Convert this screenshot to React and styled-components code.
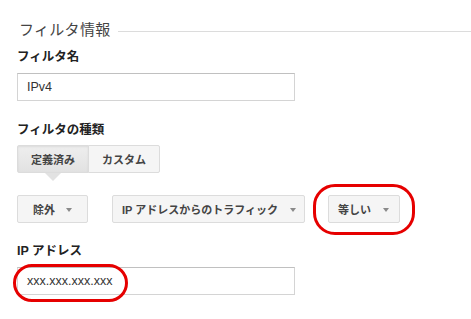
import React from "react";
import styled, { createGlobalStyle } from "styled-components";

const Global = createGlobalStyle`
  html, body { margin: 0; padding: 0; background: #fff; }
  body { font-family: "Liberation Sans", "Noto Sans CJK JP", sans-serif; color: #222; }
`;

const Page = styled.div`
  width: 471px;
  height: 319px;
  padding: 20px 0 0 17px;
  box-sizing: border-box;
  overflow: hidden;
`;

const TitleRow = styled.div`
  display: flex;
  align-items: center;
  height: 20px;
  gap: 7px;
`;

const Title = styled.div`
  font-size: 15px;
  line-height: 20px;
  color: #444;
  font-weight: 400;
  margin-left: 2px;
  letter-spacing: 0.3px;
  white-space: nowrap;
`;

const Rule = styled.div`
  flex: 1;
  height: 1px;
  background: #dcdcdc;
  margin-top: 2px;
`;

const Label = styled.div`
  font-size: 12.5px;
  line-height: 16px;
  font-weight: bold;
  color: #222;
  margin-top: ${(p) => p.$mt}px;
  white-space: nowrap;
`;

const FieldWrap = styled.div`
  position: relative;
  width: 278px;
  margin-top: 8px;
`;

const Input = styled.div`
  box-sizing: border-box;
  width: 278px;
  height: 28px;
  border: 1px solid #d4d4d4;
  border-top-color: #c0c0c0;
  background: #fff;
  padding-left: 9px;
  display: flex;
  align-items: center;
  font-size: 12.5px;
  color: #333;
`;

const Ring = styled.div`
  position: absolute;
  left: ${(p) => p.$l}px;
  top: ${(p) => p.$t}px;
  width: ${(p) => p.$w}px;
  height: ${(p) => p.$h}px;
  border: 3px solid #e60000;
  border-radius: ${(p) => p.$r}px;
  box-sizing: border-box;
  pointer-events: none;
`;

const Segmented = styled.div`
  display: flex;
  margin-top: 7px;
  position: relative;
  width: max-content;
`;

const SegButton = styled.div`
  box-sizing: border-box;
  height: 28px;
  width: ${(p) => p.$w}px;
  display: flex;
  align-items: center;
  justify-content: center;
  font-size: 11px;
  font-weight: bold;
  color: #444;
  border: 1px solid #dcdcdc;
  background: ${(p) => (p.$active ? "linear-gradient(#eeeeee, #e2e2e2)" : "#f5f5f5")};
  box-shadow: ${(p) => (p.$active ? "inset 0 1px 2px rgba(0,0,0,0.08)" : "none")};
  border-radius: ${(p) => (p.$first ? "2px 0 0 2px" : "0 2px 2px 0")};
  margin-left: ${(p) => (p.$first ? 0 : -1)}px;
  position: relative;
`;

const Pointer = styled.span`
  position: absolute;
  left: 50%;
  top: 27px;
  margin-left: -8px;
  width: 0;
  height: 0;
  border-left: 8px solid transparent;
  border-right: 8px solid transparent;
  border-top: 8px solid #e2e2e2;
  z-index: 2;
`;

const DropRow = styled.div`
  display: flex;
  align-items: center;
  margin-top: 22px;
`;

const DropSlot = styled.div`
  position: relative;
  margin-left: ${(p) => p.$ml}px;
`;

const Drop = styled.div`
  box-sizing: border-box;
  height: 28px;
  width: ${(p) => p.$w}px;
  display: flex;
  align-items: center;
  justify-content: space-between;
  padding: 0 ${(p) => p.$pr}px 0 ${(p) => p.$pl}px;
  font-size: 11px;
  font-weight: bold;
  color: #444;
  background: #f5f5f5;
  border: 1px solid #dcdcdc;
  border-radius: 2px;
  white-space: nowrap;
`;

const Caret = styled.span`
  width: 0;
  height: 0;
  border-left: 3.5px solid transparent;
  border-right: 3.5px solid transparent;
  border-top: 4px solid #8a8a8a;
  margin-top: 2px;
`;

export default function App() {
  return (
    <Page>
      <Global />
      <TitleRow>
        <Title>フィルタ情報</Title>
        <Rule />
      </TitleRow>

      <Label $mt={9}>フィルタ名</Label>
      <FieldWrap>
        <Input>IPv4</Input>
      </FieldWrap>

      <Label $mt={21}>フィルタの種類</Label>
      <Segmented>
        <SegButton $first $active $w={72}>
          定義済み
          <Pointer />
        </SegButton>
        <SegButton $w={72}>カスタム</SegButton>
      </Segmented>

      <DropRow>
        <DropSlot $ml={0}>
          <Drop $w={71} $pl={15} $pr={15}>
            除外 <Caret />
          </Drop>
        </DropSlot>
        <DropSlot $ml={24}>
          <Drop $w={193} $pl={9} $pr={8}>
            IP アドレスからのトラフィック <Caret />
          </Drop>
        </DropSlot>
        <DropSlot $ml={23}>
          <Drop $w={72} $pl={9} $pr={10}>
            等しい <Caret />
          </Drop>
          <Ring $l={-15} $t={-11} $w={102} $h={51} $r={22} />
        </DropSlot>
      </DropRow>

      <Label $mt={20}>IP アドレス</Label>
      <FieldWrap>
        <Input>xxx.xxx.xxx.xxx</Input>
        <Ring $l={-4} $t={-3} $w={115} $h={38} $r={19} />
      </FieldWrap>
    </Page>
  );
}
